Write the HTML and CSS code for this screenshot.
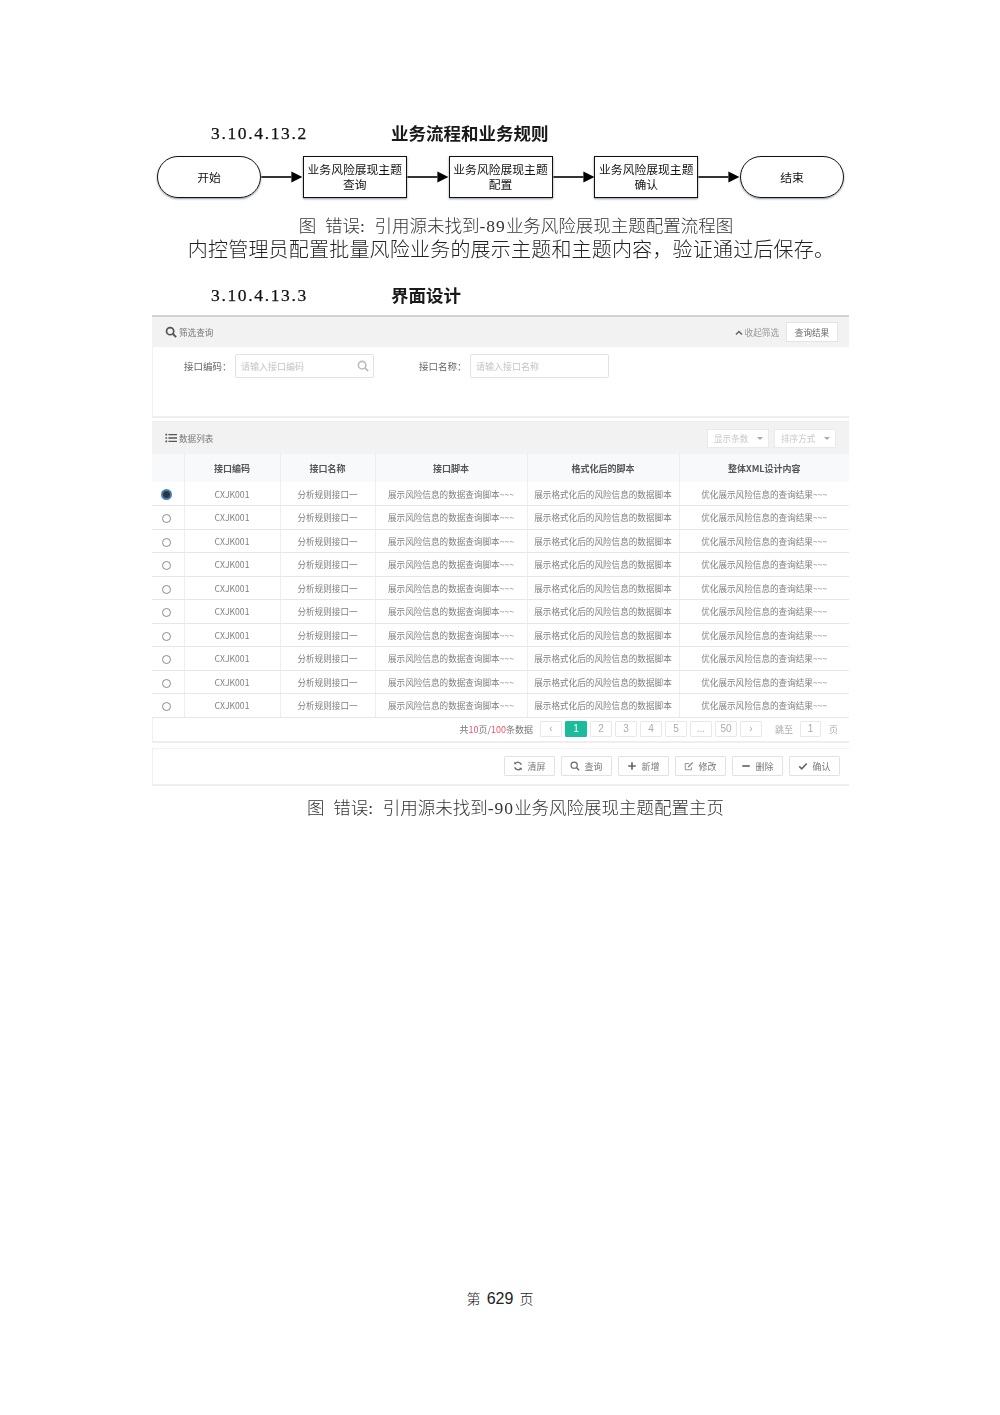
FILE: index.html
```html
<!DOCTYPE html>
<html lang="zh-CN">
<head>
    <meta charset="UTF-8">
    <meta name="viewport" content="width=device-width, initial-scale=1.0">
    <title>业务风险展现主题配置</title>
    <link rel="stylesheet" href="styles.css">
</head>
<body>

<div class="page">
    <h3 class="heading"><span class="heading-no">3.10.4.13.2</span><span>业务流程和业务规则</span></h3>

    <div class="flow">
        <div class="node terminal">开始</div>
        <svg class="arrow" viewBox="0 0 41 12"><path d="M0 6H30" stroke="#000" stroke-width="1.6"/><path d="M30 0.5L41 6L30 11.5Z"/></svg>
        <div class="node">业务风险展现主题<br>查询</div>
        <svg class="arrow" viewBox="0 0 41 12"><path d="M0 6H30" stroke="#000" stroke-width="1.6"/><path d="M30 0.5L41 6L30 11.5Z"/></svg>
        <div class="node">业务风险展现主题<br>配置</div>
        <svg class="arrow" viewBox="0 0 41 12"><path d="M0 6H30" stroke="#000" stroke-width="1.6"/><path d="M30 0.5L41 6L30 11.5Z"/></svg>
        <div class="node">业务风险展现主题<br>确认</div>
        <svg class="arrow" viewBox="0 0 41 12"><path d="M0 6H30" stroke="#000" stroke-width="1.6"/><path d="M30 0.5L41 6L30 11.5Z"/></svg>
        <div class="node terminal">结束</div>
    </div>

    <p class="caption caption-flow">图<span class="half"> </span>错误<span class="half">: </span>引用源未找到<span class="half">-89</span>业务风险展现主题配置流程图</p>
    <p class="body-text">内控管理员配置批量风险业务的展示主题和主题内容，验证通过后保存。</p>

    <h3 class="heading heading-ui"><span class="heading-no">3.10.4.13.3</span><span>界面设计</span></h3>

    <div class="shot">
        <div class="panel-head filter-head">
            <div class="panel-title">
                <svg class="icon-title" viewBox="0 0 14 14"><circle cx="6" cy="6" r="4.2" fill="none" stroke="#555" stroke-width="2"/><path d="M9 9l4 4" stroke="#555" stroke-width="2.2"/></svg>
                筛选查询
            </div>
            <div class="filter-tools">
                <span class="collapse"><svg viewBox="0 0 8 5"><path d="M1 4.5L4 1.5L7 4.5" fill="none" stroke="#666" stroke-width="1.5"/></svg>收起筛选</span>
                <span class="result-btn">查询结果</span>
            </div>
        </div>

        <div class="filter-body">
            <span class="field-label">接口编码：</span>
            <div class="field field-code">
                <span>请输入接口编码</span>
                <svg viewBox="0 0 14 14"><circle cx="6" cy="6" r="4.4" fill="none" stroke="#bbb" stroke-width="1.8"/><path d="M9 9l4 4" stroke="#bbb" stroke-width="2"/></svg>
            </div>
            <span class="field-label label-name">接口名称：</span>
            <div class="field"><span>请输入接口名称</span></div>
        </div>

        <div class="panel-head list-head">
            <div class="panel-title">
                <svg class="icon-title" viewBox="0 0 14 12"><path d="M4 2H14M4 6H14M4 10H14" stroke="#555" stroke-width="1.5"/><path d="M0.5 2H2.5M0.5 6H2.5M0.5 10H2.5" stroke="#555" stroke-width="2"/></svg>
                数据列表
            </div>
            <div class="list-tools">
                <span class="drop">显示条数<i></i></span>
                <span class="drop">排序方式<i></i></span>
            </div>
        </div>

        <table class="grid">
            <thead>
                <tr><th class="col-radio"></th><th class="col-code">接口编码</th><th class="col-name">接口名称</th><th class="col-script">接口脚本</th><th class="col-format">格式化后的脚本</th><th>整体XML设计内容</th></tr>
            </thead>
            <tbody>
                <tr><td><span class="radio checked"></span></td><td>CXJK001</td><td>分析规则接口一</td><td>展示风险信息的数据查询脚本~~~</td><td>展示格式化后的风险信息的数据脚本</td><td>优化展示风险信息的查询结果~~~</td></tr>
                <tr><td><span class="radio"></span></td><td>CXJK001</td><td>分析规则接口一</td><td>展示风险信息的数据查询脚本~~~</td><td>展示格式化后的风险信息的数据脚本</td><td>优化展示风险信息的查询结果~~~</td></tr>
                <tr><td><span class="radio"></span></td><td>CXJK001</td><td>分析规则接口一</td><td>展示风险信息的数据查询脚本~~~</td><td>展示格式化后的风险信息的数据脚本</td><td>优化展示风险信息的查询结果~~~</td></tr>
                <tr><td><span class="radio"></span></td><td>CXJK001</td><td>分析规则接口一</td><td>展示风险信息的数据查询脚本~~~</td><td>展示格式化后的风险信息的数据脚本</td><td>优化展示风险信息的查询结果~~~</td></tr>
                <tr><td><span class="radio"></span></td><td>CXJK001</td><td>分析规则接口一</td><td>展示风险信息的数据查询脚本~~~</td><td>展示格式化后的风险信息的数据脚本</td><td>优化展示风险信息的查询结果~~~</td></tr>
                <tr><td><span class="radio"></span></td><td>CXJK001</td><td>分析规则接口一</td><td>展示风险信息的数据查询脚本~~~</td><td>展示格式化后的风险信息的数据脚本</td><td>优化展示风险信息的查询结果~~~</td></tr>
                <tr><td><span class="radio"></span></td><td>CXJK001</td><td>分析规则接口一</td><td>展示风险信息的数据查询脚本~~~</td><td>展示格式化后的风险信息的数据脚本</td><td>优化展示风险信息的查询结果~~~</td></tr>
                <tr><td><span class="radio"></span></td><td>CXJK001</td><td>分析规则接口一</td><td>展示风险信息的数据查询脚本~~~</td><td>展示格式化后的风险信息的数据脚本</td><td>优化展示风险信息的查询结果~~~</td></tr>
                <tr><td><span class="radio"></span></td><td>CXJK001</td><td>分析规则接口一</td><td>展示风险信息的数据查询脚本~~~</td><td>展示格式化后的风险信息的数据脚本</td><td>优化展示风险信息的查询结果~~~</td></tr>
                <tr><td><span class="radio"></span></td><td>CXJK001</td><td>分析规则接口一</td><td>展示风险信息的数据查询脚本~~~</td><td>展示格式化后的风险信息的数据脚本</td><td>优化展示风险信息的查询结果~~~</td></tr>
            </tbody>
        </table>

        <div class="pager">
            <span class="pager-total">共<b>10</b>页/<b>100</b>条数据</span>
            <span class="pg">&lsaquo;</span>
            <span class="pg active">1</span>
            <span class="pg">2</span>
            <span class="pg">3</span>
            <span class="pg">4</span>
            <span class="pg">5</span>
            <span class="pg">...</span>
            <span class="pg">50</span>
            <span class="pg">&rsaquo;</span>
            <span class="jump">跳至</span>
            <span class="pg jump-input">1</span>
            <span class="jump-end">页</span>
        </div>

        <div class="actions">
            <span class="btn"><svg viewBox="0 0 12 12"><path d="M10 4.5A4.3 4.3 0 0 0 2.6 3M2 7.5A4.3 4.3 0 0 0 9.4 9" fill="none" stroke="#666" stroke-width="1.5"/><path d="M1.5 1v3h3zM10.5 11V8h-3z" fill="#666"/></svg>清屏</span>
            <span class="btn"><svg viewBox="0 0 12 12"><circle cx="5" cy="5" r="3.7" fill="none" stroke="#666" stroke-width="1.4"/><path d="M7.7 7.7L11 11" stroke="#666" stroke-width="1.6"/></svg>查询</span>
            <span class="btn"><svg viewBox="0 0 12 12"><path d="M6 1.5V10.5M1.5 6H10.5" stroke="#666" stroke-width="2"/></svg>新增</span>
            <span class="btn"><svg viewBox="0 0 12 12"><path d="M9 7.5V10.5H1.5V3H6" fill="none" stroke="#888" stroke-width="1.1"/><path d="M4.5 8L5 6L10 1.2L11 2.3L6.2 7.3Z" fill="#888"/></svg>修改</span>
            <span class="btn"><svg viewBox="0 0 12 12"><path d="M1.5 6H10.5" stroke="#666" stroke-width="2"/></svg>删除</span>
            <span class="btn"><svg viewBox="0 0 12 12"><path d="M1.5 6.5L4.5 9.5L10.5 3" fill="none" stroke="#666" stroke-width="2"/></svg>确认</span>
        </div>
    </div>

    <p class="caption caption-ui">图<span class="half"> </span>错误<span class="half">: </span>引用源未找到<span class="half">-90</span>业务风险展现主题配置主页</p>
</div>

<div class="page-no">第 <span>629</span> 页</div>

</body>
</html>
```

FILE: styles.css
```css
body {
    margin: 0;
    height: 1415px;
    background: white;
    color: #222;
    font-family: "Noto Sans CJK SC", sans-serif;
    display: flex;
    flex-direction: column;
}

.page {
    padding: 122px 151px 0 152px;
    flex: 1;
    filter: blur(0.25px);
}

.heading {
    display: flex;
    margin: 0;
    padding-left: 59px;
    height: 22px;
    line-height: 22px;
    font-size: 17.5px;
    font-weight: 700;
    color: #1a1a1a;
}

.heading-no {
    width: 180px;
    font-family: "Liberation Serif", serif;
    font-size: 17.5px;
    font-weight: 400;
    letter-spacing: 1.65px;
    color: #111;
    -webkit-text-stroke: 0.25px #111;
}

.heading-ui {
    margin-top: 22px;
}

/* flow chart */
.flow {
    display: flex;
    align-items: center;
    margin: 12px 5px 0 5px;
}

.node {
    width: 104px;
    height: 42px;
    box-sizing: border-box;
    border: 1.5px solid #111;
    box-shadow: 0 1px 2px rgba(60, 80, 110, 0.6);
    display: flex;
    align-items: center;
    justify-content: center;
    padding-bottom: 2px;
    text-align: center;
    font-size: 11.8px;
    line-height: 15px;
    color: #111;
}

.terminal {
    border-radius: 21px;
}

.arrow {
    width: 41.75px;
    height: 12px;
}

.caption {
    margin: 0;
    height: 20px;
    text-align: center;
    font-weight: 300;
    font-size: 17.5px;
    line-height: 20px;
    color: #333;
    white-space: nowrap;
}

.half {
    font-family: "Liberation Serif", serif;
    word-spacing: 3.4px;
    letter-spacing: 1px;
    white-space: pre;
}

.caption-flow {
    margin-top: 17px;
    padding-left: 31px;
}

.caption-ui {
    margin-top: 11px;
    padding-left: 30px;
}

.body-text {
    margin: 1px 0 0 0;
    text-align: center;
    font-weight: 300;
    font-size: 20px;
    letter-spacing: 0.2px;
    line-height: 26px;
    color: #222;
    padding-left: 21px;
    white-space: nowrap;
}

/* screenshot of the config page */
.shot {
    margin-top: 9px;
    width: 697px;
    border-top: 2px solid #d2d2d2;
    color: #777;
    font-size: 9px;
    filter: blur(0.3px);
}

.panel-head {
    display: flex;
    align-items: center;
    justify-content: space-between;
    background: #f2f2f2;
}

.filter-head {
    height: 30px;
    padding: 0 11px 0 13px;
}

.list-head {
    height: 33px;
    box-sizing: border-box;
    margin-top: 3px;
    padding: 0 13px 0 13px;
    border-top: 1px solid #ececec;
}

.panel-title {
    display: flex;
    align-items: center;
    gap: 2px;
    color: #777;
    font-size: 8.6px;
}

.icon-title {
    width: 12px;
    height: 12px;
}

.filter-tools,
.list-tools {
    display: flex;
    align-items: center;
}

.collapse {
    display: flex;
    align-items: center;
    gap: 2px;
    color: #999;
    font-size: 8.6px;
    margin-right: 7px;
}

.collapse svg {
    width: 8px;
    height: 5px;
}

.result-btn {
    width: 50px;
    height: 18px;
    line-height: 18px;
    text-align: center;
    background: white;
    border: 1px solid #e4e4e4;
    color: #666;
    font-size: 8.6px;
}

.filter-body {
    height: 71px;
    box-sizing: border-box;
    display: flex;
    align-items: flex-start;
    padding: 7px 0 0 31px;
    border-left: 1px solid #f0f0f0;
    border-bottom: 2px solid #eeeeee;
}

.field-label {
    width: 51px;
    line-height: 24px;
    font-size: 9.5px;
    color: #666;
}

.label-name {
    margin-left: 45px;
}

.field {
    width: 139px;
    height: 24px;
    box-sizing: border-box;
    border: 1px solid #e2e2e2;
    border-radius: 2px;
    display: flex;
    align-items: center;
    justify-content: space-between;
    padding: 0 4px 0 5px;
    color: #c4c4c4;
}

.field svg {
    width: 12px;
    height: 12px;
}

.drop {
    width: 62px;
    height: 19px;
    box-sizing: border-box;
    margin-left: 5px;
    padding: 0 5px 0 6px;
    background: white;
    border: 1px solid #eaeaea;
    display: flex;
    align-items: center;
    justify-content: space-between;
    color: #c8c8c8;
    font-size: 8.6px;
}

.drop i {
    border: 3.5px solid transparent;
    border-top: 3.5px solid #aaa;
    border-bottom: 0;
}

.grid {
    width: 697px;
    table-layout: fixed;
    border-collapse: collapse;
}

.col-radio { width: 32px; }
.col-code { width: 96px; }
.col-name { width: 95px; }
.col-script { width: 152px; }
.col-format { width: 152px; }

.grid th,
.grid td {
    box-sizing: border-box;
    padding: 0;
    text-align: center;
    border-right: 1px solid #eeeeee;
    font-size: 8.6px;
    white-space: nowrap;
    overflow: hidden;
}

.grid th:last-child,
.grid td:last-child {
    border-right: 0;
}

.grid th {
    height: 28px;
    background: #f7f9fa;
    color: #555;
    font-size: 9px;
    font-weight: 700;
}

.grid td {
    height: 23.5px;
    border-bottom: 1.5px solid #e6e6e6;
    color: #808080;
}

.radio {
    display: inline-block;
    width: 9px;
    height: 9px;
    margin-right: 2px;
    box-sizing: border-box;
    border: 1.5px solid #888;
    border-radius: 50%;
    vertical-align: middle;
}

.radio.checked {
    background: #333;
    border: 2px solid #3f7fc0;
    width: 11px;
    height: 11px;
}

.pager {
    height: 25px;
    box-sizing: border-box;
    display: flex;
    align-items: center;
    justify-content: flex-end;
    gap: 3px;
    padding-right: 11px;
    border-bottom: 2px solid #eeeeee;
    border-left: 1px solid #f0f0f0;
    color: #aaa;
}

.pager-total {
    color: #777;
    margin-right: 4px;
}

.pager-total b {
    color: #e8536a;
    font-weight: 400;
}

.pg {
    width: 22px;
    height: 16px;
    line-height: 14px;
    box-sizing: border-box;
    text-align: center;
    border: 1px solid #e8e8e8;
    border-radius: 1px;
    color: #aaa;
    font-size: 10px;
    font-family: "Liberation Sans", sans-serif;
}

.pg.active {
    background: #1abc9c;
    border-color: #1abc9c;
    color: white;
}

.jump {
    margin-left: 10px;
    margin-right: 4px;
}

.jump-input {
    width: 21px;
}

.jump-end {
    margin-left: 5px;
}

.actions {
    height: 38px;
    margin-top: 5px;
    box-sizing: border-box;
    display: flex;
    align-items: center;
    justify-content: flex-end;
    gap: 6px;
    padding-right: 9px;
    border-top: 1px solid #f2f2f2;
    border-left: 1px solid #f0f0f0;
    border-bottom: 2px solid #eeeeee;
}

.btn {
    width: 51px;
    height: 20px;
    box-sizing: border-box;
    border: 1px solid #e2e2e2;
    border-radius: 1px;
    display: flex;
    align-items: center;
    justify-content: center;
    gap: 4px;
    color: #777;
}

.btn svg {
    width: 10px;
    height: 10px;
}

.page-no {
    height: 127px;
    text-align: center;
    font-size: 14px;
    line-height: 20px;
    font-weight: 300;
    color: #222;
}

.page-no span {
    font-family: "Liberation Sans", sans-serif;
    font-size: 16px;
    margin: 0 3px;
    font-weight: 400;
}
```
